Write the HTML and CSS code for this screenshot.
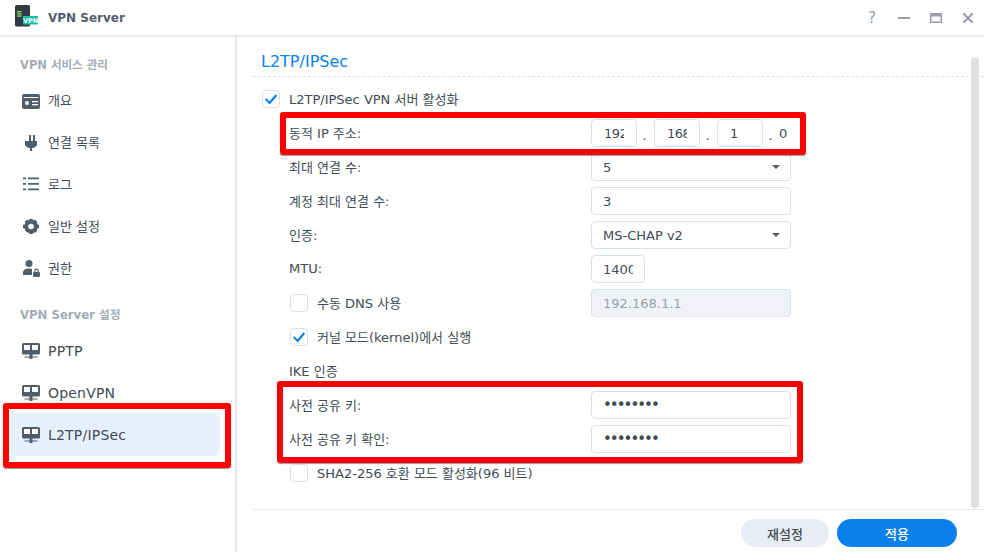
FILE: index.html
```html
<!DOCTYPE html>
<html lang="ko">
<head>
    <meta charset="UTF-8">
    <meta name="viewport" content="width=device-width, initial-scale=1.0">
    <title>VPN Server</title>
    <link rel="stylesheet" href="styles.css">
</head>
<body>
    <div class="window">
        <header class="titlebar">
            <svg class="app-icon" width="30" height="24" viewBox="0 0 30 24">
                <rect x="0" y="0" width="15" height="21.500" rx="1.500" fill="#2f3a46"/>
                <rect x="2" y="6" width="4.500" height="1.300" fill="#8fe04a"/>
                <rect x="2" y="8.200" width="4.500" height="1.300" fill="#8fe04a"/>
                <rect x="2" y="10.400" width="4.500" height="1.300" fill="#8fe04a"/>
                <rect x="8" y="11" width="15" height="8.500" fill="#14bfa8"/>
                <text x="15.500" y="17.500" class="app-icon-text" text-anchor="middle">VPN</text>
            </svg>
            <div class="app-name">VPN Server</div>
            <div class="window-btns">
                <span class="help-btn">?</span>
                <svg width="14" height="14" viewBox="0 0 14 14"><rect x="1" y="6" width="12" height="2" fill="#979ea8"/></svg>
                <svg width="14" height="14" viewBox="0 0 14 14"><path d="M1 2h12v10H1z M2.500 5.500v5h9v-5z" fill="#979ea8" fill-rule="evenodd"/></svg>
                <svg width="14" height="14" viewBox="0 0 14 14"><path d="M2.500 2.500l9 9M11.500 2.500l-9 9" stroke="#979ea8" stroke-width="2.200" fill="none"/></svg>
            </div>
        </header>

        <div class="content">
            <nav class="sidebar">
                <div class="nav-title">VPN 서비스 관리</div>
                <a class="nav-item">
                    <svg class="nav-icon" viewBox="0 0 18 18"><rect x="0" y="3" width="18" height="15" rx="2" fill="#525d6b"/><rect x="1.500" y="6" width="15" height="1" fill="#fff"/><circle cx="5" cy="12" r="2" fill="#fff"/><rect x="10" y="10" width="6" height="1.300" fill="#fff"/><rect x="10" y="13" width="6" height="1.300" fill="#fff"/></svg>
                    <span class="nav-text">개요</span>
                </a>
                <a class="nav-item">
                    <svg class="nav-icon" viewBox="0 0 18 18"><path d="M7 2h2v6h2V2h2v6h2v4.500l-3.500 2.500H10v3H8v-3H6.500L3 12.500V8h4z" fill="#525d6b"/></svg>
                    <span class="nav-text">연결 목록</span>
                </a>
                <a class="nav-item">
                    <svg class="nav-icon" viewBox="0 0 18 18"><path d="M1 2.500h3v1.800H1z M6 2.500h11v1.800H6z M1 8h3v1.800H1z M6 8h11v1.800H6z M1 13.500h3v1.800H1z M6 13.500h11v1.800H6z" fill="#525d6b"/></svg>
                    <span class="nav-text">로그</span>
                </a>
                <a class="nav-item">
                    <svg class="nav-icon" viewBox="0 0 18 18"><circle cx="9" cy="9.500" r="4.800" fill="none" stroke="#525d6b" stroke-width="4"/><path d="M7.200 2h3.600v3h-3.600z M7.200 14h3.600v3h-3.600z M1 7.700h3v3.600H1z M14 7.700h3v3.600h-3z M2.600 5l2.400-2.400 2 2-2.400 2.400z M11 14l2.400-2.400 2 2-2.400 2.400z M13 2.600l2.400 2.400-2 2-2.400-2.400z M5 11l2.400 2.400-2 2-2.400-2.400z" fill="#525d6b"/></svg>
                    <span class="nav-text">일반 설정</span>
                </a>
                <a class="nav-item">
                    <svg class="nav-icon" viewBox="0 0 18 18"><circle cx="7" cy="4.500" r="3.500" fill="#525d6b"/><path d="M1 16v-2.500C1 11 3.500 9.500 7 9.500c1.500 0 2.800.3 3.800.8V16z" fill="#525d6b"/><rect x="10" y="10" width="8" height="8" fill="#fff"/><rect x="11" y="13" width="7" height="5" rx="1" fill="#525d6b"/><path d="M12.800 13v-1.200a1.700 1.700 0 0 1 3.400 0V13" fill="none" stroke="#525d6b" stroke-width="1.200"/></svg>
                    <span class="nav-text">권한</span>
                </a>

                <div class="nav-title nav-title-second">VPN Server 설정</div>
                <a class="nav-item">
                    <svg class="nav-icon" viewBox="0 0 18 18"><use href="#net-icon"/></svg>
                    <span class="nav-text-latin">PPTP</span>
                </a>
                <a class="nav-item">
                    <svg class="nav-icon" viewBox="0 0 18 18"><use href="#net-icon"/></svg>
                    <span class="nav-text-latin">OpenVPN</span>
                </a>
                <a class="nav-item active">
                    <svg class="nav-icon" viewBox="0 0 18 18"><use href="#net-icon"/></svg>
                    <span class="nav-text-latin">L2TP/IPSec</span>
                </a>
            </nav>

            <main class="main">
                <div class="panel">
                    <h2 class="panel-title">L2TP/IPSec</h2>
                    <form class="form">
                        <div class="row row-check">
                            <span class="checkbox checked"><svg viewBox="0 0 18 18"><path d="M3 9l4.500 4.500 7.500-9" fill="none" stroke="#0a80ed" stroke-width="2.400"/></svg></span>
                            <span class="row-text">L2TP/IPSec VPN 서버 활성화</span>
                        </div>
                        <div class="row">
                            <label class="row-label">동적 IP 주소:</label>
                            <div class="ip-group">
                                <input class="input input-ip" value="192">
                                <span class="ip-dot">.</span>
                                <input class="input input-ip" value="168">
                                <span class="ip-dot">.</span>
                                <input class="input input-ip" value="1">
                                <span class="ip-dot">.</span>
                                <span class="ip-last">0</span>
                            </div>
                        </div>
                        <div class="row">
                            <label class="row-label">최대 연결 수:</label>
                            <div class="select">5</div>
                        </div>
                        <div class="row">
                            <label class="row-label">계정 최대 연결 수:</label>
                            <input class="input" value="3">
                        </div>
                        <div class="row">
                            <label class="row-label">인증:</label>
                            <div class="select">MS-CHAP v2</div>
                        </div>
                        <div class="row">
                            <label class="row-label">MTU:</label>
                            <input class="input input-mtu" value="1400">
                        </div>
                        <div class="row row-sub">
                            <span class="checkbox"></span>
                            <label class="row-label row-label-sub">수동 DNS 사용</label>
                            <input class="input input-disabled" value="192.168.1.1" disabled>
                        </div>
                        <div class="row row-sub">
                            <span class="checkbox checked"><svg viewBox="0 0 18 18"><path d="M3 9l4.500 4.500 7.500-9" fill="none" stroke="#0a80ed" stroke-width="2.400"/></svg></span>
                            <span class="row-text">커널 모드(kernel)에서 실행</span>
                        </div>
                        <div class="row">
                            <label class="row-label">IKE 인증</label>
                        </div>
                        <div class="row">
                            <label class="row-label">사전 공유 키:</label>
                            <input class="input input-pass" type="password" value="12345678">
                        </div>
                        <div class="row">
                            <label class="row-label">사전 공유 키 확인:</label>
                            <input class="input input-pass" type="password" value="12345678">
                        </div>
                        <div class="row row-sub">
                            <span class="checkbox"></span>
                            <span class="row-text">SHA2-256 호환 모드 활성화(96 비트)</span>
                        </div>
                    </form>
                    <div class="scrollbar"></div>
                </div>
                <footer class="footer">
                    <button class="btn btn-reset" type="button">재설정</button>
                    <button class="btn btn-apply" type="button">적용</button>
                </footer>
            </main>
        </div>

        <!-- red marks drawn on top of the screenshot -->
        <div class="mark mark-nav"></div>
        <div class="mark mark-ip"></div>
        <div class="mark mark-key"></div>
    </div>

    <svg class="defs" width="0" height="0">
        <symbol id="net-icon" viewBox="0 0 18 18">
            <rect x="0" y="1" width="18" height="11.500" rx="1.500" fill="#525d6b"/>
            <rect x="2" y="3" width="6" height="5" fill="#fff"/>
            <rect x="10" y="3" width="6" height="5" fill="#fff"/>
            <rect x="7.500" y="12" width="3" height="5" fill="#525d6b"/>
            <rect x="2.500" y="14.500" width="13" height="1" fill="#525d6b"/>
        </symbol>
    </svg>
</body>
</html>
```

FILE: styles.css
```css
:root {
    --text: #414b55;
    --icon: #525d6b;
    --blue: #0a80ed;
    --line: #e6e9ec;
    --input-line: #d7e1ec;
    --red: #ff0000;
}

* {
    margin: 0;
    padding: 0;
    box-sizing: border-box;
    font-family: "DejaVu Sans", "Noto Sans CJK KR", sans-serif;
}

body {
    background-color: #fff;
    color: var(--text);
    font-size: 13px;
    overflow: hidden;
}

.window {
    position: relative;
    width: 984px;
    height: 552px;
    display: flex;
    flex-direction: column;
}

.titlebar {
    height: 37px;
    display: flex;
    align-items: center;
    padding-left: 15px;
    border-bottom: 2px solid var(--line);
}

.app-icon {
    margin-right: 3px;
    margin-top: -1px;
}

.app-icon-text {
    font-size: 6.500px;
    font-weight: bold;
    fill: #fff;
}

.app-name {
    font-size: 12px;
    font-weight: bold;
    color: #525d6b;
}

.window-btns {
    margin-left: auto;
    display: flex;
    align-items: center;
    gap: 18px;
    padding-right: 9px;
}

.help-btn {
    width: 14px;
    text-align: center;
    font-size: 15px;
    color: #979ea8;
}

.content {
    flex: 1;
    display: flex;
    min-height: 0;
}

.sidebar {
    width: 237px;
    border-right: 2px solid var(--line);
    padding: 12px 15px 0 8px;
}

.nav-title {
    height: 30px;
    line-height: 30px;
    padding: 1px 0 0 12px;
    font-size: 11.500px;
    font-weight: bold;
    color: #a4abb3;
}

.nav-title-second {
    height: 31px;
    margin-top: 10px;
    font-size: 11.700px;
}

.nav-item {
    height: 42px;
    display: flex;
    align-items: center;
    gap: 8px;
    padding-left: 14px;
    border-radius: 6px;
}

.nav-item.active {
    background-color: #e6f1fd;
}

.nav-icon {
    width: 18px;
    height: 18px;
    flex-shrink: 0;
}

.nav-text {
    padding-bottom: 2px;
}

.nav-text-latin {
    font-size: 14px;
    letter-spacing: 0.2px;
}

.main {
    flex: 1;
    display: flex;
    flex-direction: column;
    min-width: 0;
    padding-left: 16px;
}

.panel {
    position: relative;
    flex: 1;
    min-height: 0;
}

.panel-title {
    height: 40px;
    padding: 15px 0 0 8px;
    font-size: 16px;
    line-height: 20px;
    font-weight: normal;
    color: var(--blue);
    border-bottom: 1px dashed #d7e1ec;
}

.form {
    padding: 8px 0 0 36px;
}

.row {
    height: 28px;
    margin-bottom: 6px;
    display: flex;
    align-items: center;
}

.row-check {
    margin-left: -27px;
}

.row-sub {
    margin-left: 1px;
}

.row-label {
    width: 302px;
    flex-shrink: 0;
    padding-bottom: 2px;
}

.row-label-sub {
    width: 274px;
}

.row-text {
    padding-bottom: 2px;
}

.checkbox {
    width: 18px;
    height: 18px;
    margin-right: 9px;
    flex-shrink: 0;
    background-color: #fff;
    border: 1px solid var(--input-line);
    border-radius: 4px;
}

.checkbox svg {
    display: block;
    width: 16px;
    height: 16px;
}

.input,
.select {
    width: 200px;
    height: 28px;
    padding: 0 11px;
    font-size: 13px;
    color: var(--text);
    background-color: #fff;
    border: 1px solid var(--input-line);
    border-radius: 4px;
    outline: none;
}

.select {
    position: relative;
    line-height: 27px;
}

.select::after {
    content: "";
    position: absolute;
    right: 10px;
    top: 11px;
    border-left: 4.500px solid transparent;
    border-right: 4.500px solid transparent;
    border-top: 4.500px solid var(--icon);
}

.input-ip {
    width: 46px;
    padding: 0 12px;
    letter-spacing: -0.5px;
}

.input-mtu {
    width: 54px;
}

.input-pass {
    font-size: 15px;
    letter-spacing: -2px;
}

.input-disabled {
    background-color: #f0f2f5;
    color: #9aa1a9;
}

.ip-group {
    display: flex;
    align-items: center;
}

.ip-dot {
    width: 17px;
    text-align: center;
    padding-top: 4px;
    margin-left: -1px;
    margin-right: 1px;
}

.ip-last {
    margin-left: -1px;
}

.scrollbar {
    position: absolute;
    right: 5px;
    top: 20px;
    width: 8px;
    height: 451px;
    border-radius: 4px;
    background-color: #e0e0e0;
}

.footer {
    height: 43px;
    display: flex;
    justify-content: flex-end;
    align-items: flex-start;
    gap: 8px;
    padding: 9px 27px 0 0;
    border-top: 1px solid var(--line);
}

.btn {
    height: 28px;
    border: none;
    border-radius: 14px;
    font-size: 13px;
    font-weight: 500;
}

.btn-reset {
    width: 88px;
    background-color: #e8edf4;
    color: var(--text);
}

.btn-apply {
    width: 120px;
    background-color: var(--blue);
    color: #fff;
}

.mark {
    position: absolute;
    border: 6px solid var(--red);
    border-radius: 3px;
    box-shadow: 0 1px 1px rgba(0,0,0,0.4);
}

.mark-nav {
    left: 3px;
    top: 403px;
    width: 228px;
    height: 65px;
}

.mark-ip {
    left: 280px;
    top: 112px;
    width: 526px;
    height: 43px;
}

.mark-key {
    left: 277px;
    top: 381px;
    width: 526px;
    height: 82px;
}

.defs {
    position: absolute;
}
```
